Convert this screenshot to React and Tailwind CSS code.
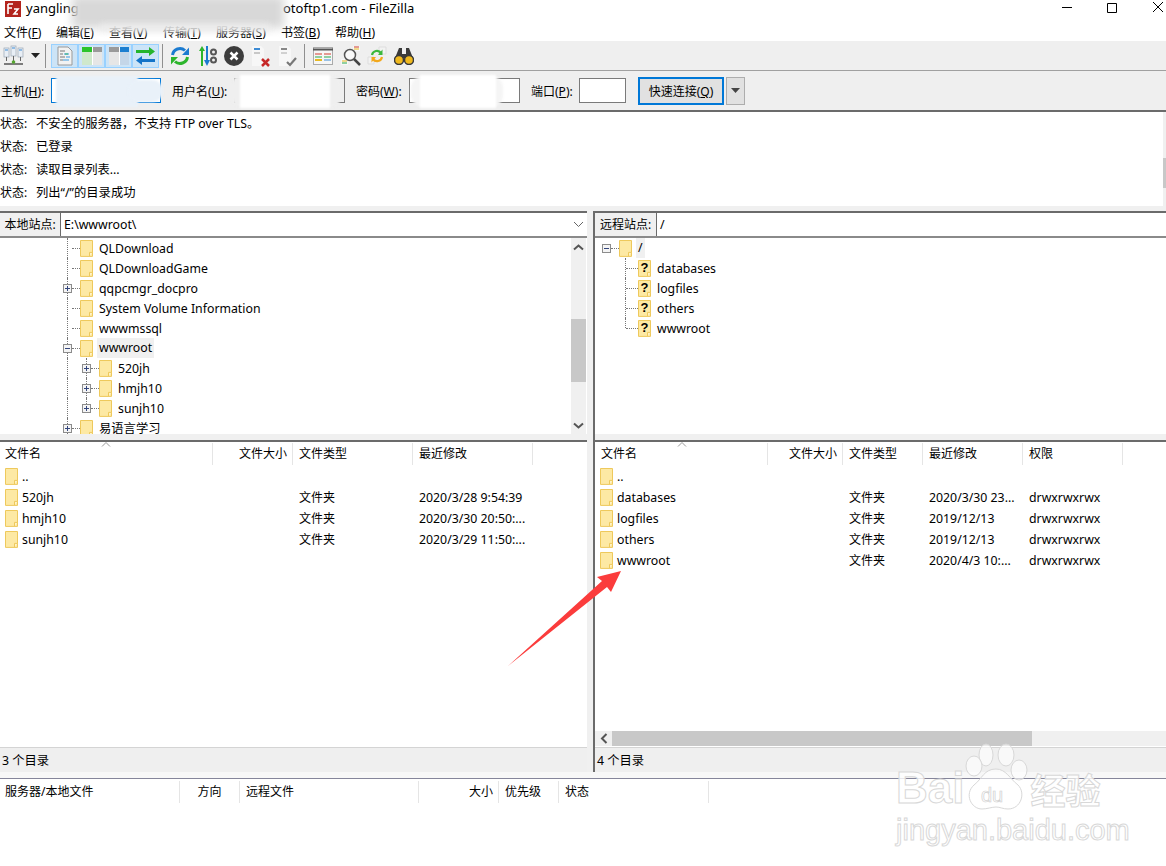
import React from "react";

const Folder = ({ unknown }) => (
  <svg width="13" height="17" viewBox="0 0 13 17" className="shrink-0">
    <path d="M.5.5h12v15.900H.5z" fill="#fde9a4" stroke="#eec95c" />
    <path d="M9.500 16.400v-4h3" fill="#fff3c8" stroke="#eec95c" />
    {unknown && <text x="2.500" y="12" fontSize="13" fontWeight="700" fontFamily="Liberation Sans" fill="#000">?</text>}
  </svg>
);

const Expander = ({ open }) => (
  <svg width="9" height="9" viewBox="0 0 9 9" className="relative z-10 shrink-0">
    <rect x=".5" y=".5" width="8" height="8" fill="#f4f4f4" stroke="#8c8c8c" />
    <path d="M2 4.500h5" stroke="#33457c" />
    {!open && <path d="M4.500 2v5" stroke="#33457c" />}
  </svg>
);

const LocalRow = ({ name, depth, exp, open, active, last }) => (
  <div className="relative flex h-5 shrink-0 items-center">
    <div className="absolute inset-y-0 left-[67px] border-l border-dotted border-[#777]" />
    {depth === 1 && (
      <div className={last ? "absolute top-0 h-[10px] left-[86px] border-l border-dotted border-[#777]" : "absolute inset-y-0 left-[86px] border-l border-dotted border-[#777]"} />
    )}
    <div className={depth === 1 ? "w-[82px] shrink-0" : "w-[63px] shrink-0"} />
    {exp ? <Expander open={open} /> : <div className="w-[9px] shrink-0" />}
    <div className="h-0 w-2 shrink-0 border-t border-dotted border-[#777]" />
    <Folder />
    <span className={active ? "ml-1 flex h-5 items-center bg-[#f0f0f0] px-0.5 pt-px" : "ml-1 px-0.5 leading-[15px]"}>{name}</span>
  </div>
);

const RemoteRow = ({ name, last }) => (
  <div className="relative flex h-5 shrink-0 items-center">
    <div className={last ? "absolute left-[30px] top-0 h-[10px] border-l border-dotted border-[#777]" : "absolute inset-y-0 left-[30px] border-l border-dotted border-[#777]"} />
    <div className="w-[31px] shrink-0" />
    <div className="h-0 w-[12px] shrink-0 border-t border-dotted border-[#777]" />
    <Folder unknown />
    <span className="ml-[6px] leading-[15px]">{name}</span>
  </div>
);

const Chevron = ({ dir }) => (
  <svg width="11" height="8" viewBox="0 0 11 8">
    <path d={dir === "up" ? "M1 6.500l4.500-4 4.500 4" : "M1 1.500l4.500 4 4.500-4"} fill="none" stroke="#555" strokeWidth="2" />
  </svg>
);

const HeaderCell = ({ w, right, children }) => (
  <div className={"flex h-[22px] shrink-0 items-center border-r border-[#e5e5e5] px-[5px] " + w + (right ? " justify-end" : "")}>
    {children}
  </div>
);

const FileRow = ({ name, cols, date, perm }) => (
  <div className="flex h-[21px] shrink-0 items-center leading-[15px]">
    <div className={cols[0] + " flex shrink-0 items-center gap-1 pl-[5px]"}>
      <Folder />
      <span>{name}</span>
    </div>
    <div className={cols[1] + " shrink-0"} />
    <div className={cols[2] + " shrink-0 pl-[6px] text-xs"}>{date && "文件夹"}</div>
    <div className={cols[3] + " shrink-0 whitespace-nowrap pl-[6px]"}>{date}</div>
    {perm && <div className="pl-[6px]">{perm}</div>}
  </div>
);

const ToolSep = () => <div className="mx-[3px] h-[24px] w-px bg-[#8f8f8f]" />;

const Toggle = ({ children }) => (
  <div className="flex h-[24px] w-[27px] items-center justify-center border border-[#99d1ff] bg-[#cce4f7]">{children}</div>
);

const Log = ({ children }) => (
  <div className="flex h-[23px] shrink-0 items-center leading-[15px]">
    <span className="w-9 shrink-0 pt-px text-xs">状态:</span>
    <span>{children}</span>
  </div>
);

const Field = ({ w, children }) => <div className={"h-[25px] shrink-0 border border-[#7a7a7a] " + w}>{children}</div>;

const leftCols = ["w-[213px]", "w-[80px]", "w-[120px]", "w-[120px]"];
const rightCols = ["w-[173px]", "w-[75px]", "w-[80px]", "w-[100px]"];

export default function App() {
  return (
    <div className="relative flex h-[866px] w-[1166px] flex-col overflow-hidden bg-white text-[12.3px] leading-none text-black font-['Noto_Sans','Noto_Sans_CJK_SC',sans-serif]">
      {/* title bar */}
      <div className="flex h-5 shrink-0 items-start pt-px">
        <svg width="16" height="16" viewBox="0 0 16 16" className="ml-[5px] shrink-0">
          <rect width="16" height="16" fill="#b3241d" />
          <path d="M3 3h5M3 3v10M3 7h4M9 8h4l-4 5h4" stroke="#fff" strokeWidth="1.600" fill="none" />
        </svg>
        <span className="ml-[5px] -mt-px w-[257px] shrink-0 text-[13px] leading-[16px]">yangling</span>
        <span className="-mt-px text-[13px] leading-[16px]">otoftp1.com - FileZilla</span>
        <svg width="104" height="14" viewBox="0 0 104 14" className="ml-auto mr-[3px] shrink-0">
          <path d="M3 6.500h10M48.500 2.500h9v9h-9zM94 1l10 10M104 1L94 11" fill="none" stroke="#000" />
        </svg>
      </div>

      {/* menu */}
      <div className="flex h-[21px] shrink-0 items-center pl-1 pt-[5px] text-xs">
        <span className="w-[52px] shrink-0">文件(<u>F</u>)</span>
        <span className="w-[53px] shrink-0">编辑(<u>E</u>)</span>
        <span className="w-[54px] shrink-0">查看(<u>V</u>)</span>
        <span className="w-[53px] shrink-0">传输(<u>T</u>)</span>
        <span className="w-[65px] shrink-0">服务器(<u>S</u>)</span>
        <span className="w-[54px] shrink-0">书签(<u>B</u>)</span>
        <span>帮助(<u>H</u>)</span>
      </div>

      {/* toolbar */}
      <div className="flex h-[30px] shrink-0 items-center border-b border-[#a0a0a0] bg-[#efefef] pl-[3px]">
        <svg width="21" height="24" viewBox="0 0 21 24" className="shrink-0">
          <g fill="#e8eef5" stroke="#9aa7b5" strokeWidth=".7">
            <rect x="1" y="4" width="5" height="9" />
            <rect x="8" y="2" width="5" height="10" />
            <rect x="15" y="4" width="5" height="9" />
          </g>
          <path d="M2 6h3M9 4h3M16 6h3" stroke="#3d8bd4" />
          <path d="M3.500 13v4M10.500 12v5M17.500 13v4" stroke="#666" />
          <path d="M1 20h19" stroke="#555" strokeWidth="1.500" />
          <circle cx="10.500" cy="18" r="1.800" fill="#55a630" />
        </svg>
        <svg width="9" height="5" viewBox="0 0 9 5" className="ml-[7px] mr-[2px] shrink-0"><path d="M0 0h9L4.500 5z" fill="#222" /></svg>
        <ToolSep />
        <div className="ml-[2px] flex">
          <Toggle>
            <svg width="16" height="20" viewBox="0 0 16 20">
              <path d="M1 1h10l4 4v14H1z" fill="#f2f2f2" stroke="#999" />
              <path d="M3 5h5M3 8h3M3 11h5M3 14h3" stroke="#777" />
              <path d="M7 8h5M9 11h4M6 14h6" stroke="#3d9be0" />
              <path d="M8 8h3" stroke="#35b36b" />
            </svg>
          </Toggle>
          <Toggle>
            <svg width="20" height="18" viewBox="0 0 20 18">
              <rect width="20" height="18" fill="#e6e6e6" />
              <rect width="10" height="18" fill="#cfe8cc" />
              <rect width="10" height="5" fill="#2bc42b" />
              <rect x="10" width="10" height="5" fill="#9a9a9a" />
              <path d="M10.500 0v18" stroke="#fff" />
            </svg>
          </Toggle>
          <Toggle>
            <svg width="20" height="18" viewBox="0 0 20 18">
              <rect width="20" height="18" fill="#e6e6e6" />
              <rect x="10" width="10" height="18" fill="#c4d6e8" />
              <rect x="10" width="10" height="5" fill="#1c7fd0" />
              <rect width="10" height="5" fill="#9a9a9a" />
              <path d="M10.500 0v18" stroke="#fff" />
            </svg>
          </Toggle>
          <Toggle>
            <svg width="21" height="20" viewBox="0 0 21 20">
              <path d="M1 5.500h14" stroke="#25b52d" strokeWidth="3" />
              <path d="M14 1l6 4.500-6 4.500z" fill="#25b52d" />
              <path d="M20 14.500H6" stroke="#1474c8" strokeWidth="3" />
              <path d="M7 10l-6 4.500L7 19z" fill="#1474c8" />
            </svg>
          </Toggle>
        </div>
        <ToolSep />
        <svg width="20" height="20" viewBox="0 0 20 20" className="ml-1 shrink-0">
          <path d="M2.500 9A7.500 7.500 0 0 1 15 4.500" fill="none" stroke="#1b7bd0" strokeWidth="3" />
          <path d="M19 1.500V9h-7z" fill="#1b7bd0" />
          <path d="M17.500 11A7.500 7.500 0 0 1 5 15.500" fill="none" stroke="#2cb52c" strokeWidth="3" />
          <path d="M1 18.500V11h7z" fill="#2cb52c" />
        </svg>
        <svg width="20" height="22" viewBox="0 0 20 22" className="ml-2 shrink-0">
          <path d="M4 21V5" stroke="#2cb52c" strokeWidth="2" />
          <path d="M1 6l3-5 3 5z" fill="#2cb52c" />
          <path d="M9 1v15" stroke="#1b7bd0" strokeWidth="2" />
          <path d="M6 15l3 6 3-6z" fill="#1b7bd0" />
          <circle cx="15.500" cy="7" r="2.500" fill="none" stroke="#555" strokeWidth="2" />
          <circle cx="15.500" cy="15" r="2.500" fill="none" stroke="#555" strokeWidth="2" />
        </svg>
        <svg width="20" height="20" viewBox="0 0 20 20" className="ml-[6px] shrink-0">
          <circle cx="10" cy="10" r="10" fill="#3c3c3c" />
          <path d="M6.500 6.500l7 7M13.500 6.500l-7 7" stroke="#fff" strokeWidth="2.500" />
        </svg>
        <svg width="20" height="22" viewBox="0 0 20 22" className="ml-[7px] shrink-0">
          <path d="M1 1h9l3 3v17H1z" fill="#f7f7f7" />
          <path d="M3 4h6" stroke="#3d8bd4" strokeWidth="2" />
          <path d="M3 8h6" stroke="#999" />
          <path d="M11 14l7 7M18 14l-7 7" stroke="#c62828" strokeWidth="2.500" />
        </svg>
        <svg width="20" height="22" viewBox="0 0 20 22" className="ml-[7px] shrink-0">
          <path d="M1 1h9l3 3v17H1z" fill="#f7f7f7" />
          <path d="M3 4h6" stroke="#888" strokeWidth="2" />
          <path d="M3 8h6" stroke="#aaa" />
          <path d="M9 17l3 3 6-7" fill="none" stroke="#777" strokeWidth="2.200" />
        </svg>
        <div className="ml-[3px]"><ToolSep /></div>
        <svg width="20" height="18" viewBox="0 0 20 18" className="ml-[5px] shrink-0">
          <rect x=".5" y=".5" width="19" height="17" fill="#f6f6f6" stroke="#aaa" />
          <path d="M0 2.500h20" stroke="#555" strokeWidth="2" />
          <path d="M2 7h7M11 7h7" stroke="#d23c2e" />
          <path d="M2 10h7M11 10h7" stroke="#2aa84a" />
          <path d="M2 13h7" stroke="#e8b920" strokeWidth="2" />
          <path d="M11 13h7" stroke="#3d8bd4" />
        </svg>
        <svg width="22" height="22" viewBox="0 0 22 22" className="ml-[7px] shrink-0">
          <path d="M13 1h7v5h-7zM1 14h7v6H1z" fill="#f7f7f7" />
          <path d="M14 2h5" stroke="#d23c2e" />
          <path d="M14 4h5" stroke="#e8b920" />
          <path d="M2 16h5" stroke="#e8b920" />
          <path d="M2 18h5" stroke="#2aa84a" />
          <circle cx="10" cy="10" r="5.500" fill="#fff" fillOpacity=".6" stroke="#555" strokeWidth="1.500" />
          <path d="M14 14l6 6" stroke="#444" strokeWidth="2.500" />
        </svg>
        <svg width="20" height="20" viewBox="0 0 20 20" className="ml-[5px] shrink-0">
          <path d="M1 11h6v7H1zM12 1h7v7h-7z" fill="#f2f2f2" stroke="#ddd" />
          <path d="M5 9a5 5 0 0 1 9-2" fill="none" stroke="#3cb83c" strokeWidth="2.200" />
          <path d="M15 11a5 5 0 0 1-9 2" fill="none" stroke="#f2a81d" strokeWidth="2.200" />
          <path d="M15.500 3.500V9H11z" fill="#3cb83c" />
          <path d="M4.500 16.500V11H9z" fill="#f2a81d" />
        </svg>
        <svg width="20" height="18" viewBox="0 0 20 18" className="ml-[7px] shrink-0">
          <path d="M5 1h3v6h4V1h3l4 10H1z" fill="#3a3a3a" />
          <circle cx="5" cy="13" r="4.500" fill="#f0b91e" stroke="#3a3a3a" strokeWidth="1.500" />
          <circle cx="15" cy="13" r="4.500" fill="#f0b91e" stroke="#3a3a3a" strokeWidth="1.500" />
        </svg>
      </div>

      {/* quick connect */}
      <div className="flex h-[41px] shrink-0 items-center border-b-2 border-[#6b6b6b] bg-[#efefef] text-xs">
        <span className="ml-px w-[50px] shrink-0 pt-0.5">主机(<u>H</u>):</span>
        <Field w="w-[110px] border-[#0078d7] bg-white" />
        <span className="ml-[11px] w-[62px] shrink-0 pt-0.5">用户名(<u>U</u>):</span>
        <Field w="w-[111px]" />
        <span className="ml-[11px] w-[53px] shrink-0 pt-0.5">密码(<u>W</u>):</span>
        <Field w="w-[111px] bg-white" />
        <span className="ml-[11px] w-[48px] shrink-0 pt-0.5">端口(<u>P</u>):</span>
        <Field w="w-[47px] bg-white" />
        <div className="ml-3 flex h-7 w-[86px] shrink-0 items-center justify-center border-2 border-[#0078d7] bg-[#e1e1e1] pt-0.5">快速连接(<u>Q</u>)</div>
        <div className="ml-0.5 flex h-7 w-[19px] shrink-0 items-center justify-center border border-[#adadad] bg-[#e1e1e1]">
          <svg width="9" height="5" viewBox="0 0 9 5"><path d="M0 0h9L4.500 5z" fill="#444" /></svg>
        </div>
      </div>

      {/* message log */}
      <div className="flex h-[94px] shrink-0">
        <div className="flex-1">
          <Log>不安全的服务器，不支持 FTP over TLS。</Log>
          <Log>已登录</Log>
          <Log>读取目录列表...</Log>
          <Log>列出“/”的目录成功</Log>
        </div>
        <div className="w-[3px] shrink-0 bg-[#f0f0f0] pt-[46px]">
          <div className="h-[30px] bg-[#c8c8c8]" />
        </div>
      </div>
      <div className="h-[5px] shrink-0 bg-[#f0f0f0]" />

      {/* local and remote panes */}
      <div className="flex h-[561px] shrink-0">
        <div className="flex w-[587px] shrink-0 flex-col">
          <div className="flex h-[27px] shrink-0 border-y-2 border-t-[#6b6b6b] border-b-[#8a8a8a]">
            <div className="flex w-[61px] shrink-0 items-center justify-center border-r border-[#6b6b6b] bg-[#f0f0f0] pt-px text-xs">本地站点:</div>
            <div className="flex flex-1 items-center pl-[3px] pt-0.5">E:\wwwroot\</div>
            <div className="flex w-[14px] shrink-0 items-center"><svg width="11" height="7" viewBox="0 0 11 7"><path d="M1 1l4.500 4.500L10 1" fill="none" stroke="#666" /></svg></div>
          </div>
          <div className="flex h-[196px] shrink-0 overflow-hidden">
            <div className="flex-1">
              <LocalRow name="QLDownload" />
              <LocalRow name="QLDownloadGame" />
              <LocalRow name="qqpcmgr_docpro" exp />
              <LocalRow name="System Volume Information" />
              <LocalRow name="wwwmssql" />
              <LocalRow name="wwwroot" exp open active />
              <LocalRow name="520jh" depth={1} exp />
              <LocalRow name="hmjh10" depth={1} exp />
              <LocalRow name="sunjh10" depth={1} exp last />
              <LocalRow name="易语言学习" exp />
            </div>
            <div className="mr-px flex w-[15px] shrink-0 flex-col bg-[#f0f0f0]">
              <div className="flex h-[17px] shrink-0 items-center justify-center"><Chevron dir="up" /></div>
              <div className="mt-[64px] h-[63px] shrink-0 bg-[#c8c8c8]" />
              <div className="mt-auto flex h-[17px] shrink-0 items-center justify-center"><Chevron /></div>
            </div>
          </div>
          <div className="h-[6px] shrink-0 bg-[#f0f0f0]" />
          <div className="relative flex flex-1 flex-col border-t-2 border-[#6b6b6b]">
            <svg width="10" height="5" viewBox="0 0 10 5" className="absolute left-[101px] top-0"><path d="M1 4.500l4-4 4 4" fill="none" stroke="#999" /></svg>
            <div className="flex h-[24px] shrink-0 items-center text-xs">
              <HeaderCell w="w-[213px]">文件名</HeaderCell>
              <HeaderCell w="w-[80px]" right>文件大小</HeaderCell>
              <HeaderCell w="w-[120px] pl-[6px]">文件类型</HeaderCell>
              <HeaderCell w="w-[120px] pl-[6px]">最近修改</HeaderCell>
            </div>
            <div className="flex flex-1 flex-col">
              <FileRow name=".." cols={leftCols} />
              <FileRow name="520jh" cols={leftCols} date="2020/3/28 9:54:39" />
              <FileRow name="hmjh10" cols={leftCols} date="2020/3/30 20:50:..." />
              <FileRow name="sunjh10" cols={leftCols} date="2020/3/29 11:50:..." />
            </div>
            <div className="flex h-[25px] shrink-0 items-center border-t border-[#d4d4d4] bg-[#efefef] pl-0.5 pt-0.5">3 个目录</div>
          </div>
        </div>
        <div className="w-[6px] shrink-0 bg-[#f0f0f0]" />
        <div className="flex w-[573px] shrink-0 flex-col border-l-2 border-[#6b6b6b]">
          <div className="flex h-[27px] shrink-0 border-y-2 border-t-[#6b6b6b] border-b-[#8a8a8a]">
            <div className="flex w-[62px] shrink-0 items-center justify-center border-r border-[#6b6b6b] bg-[#f0f0f0] pt-px text-xs">远程站点:</div>
            <div className="flex flex-1 items-center pl-[3px] pt-0.5">/</div>
          </div>
          <div className="flex h-[196px] shrink-0 flex-col">
            <div className="flex h-5 shrink-0 items-center pl-[7px]">
              <Expander open />
              <div className="h-0 w-2 shrink-0 border-t border-dotted border-[#777]" />
              <Folder />
              <span className="ml-1 flex h-5 items-center bg-[#f0f0f0] px-0.5">/</span>
            </div>
            <RemoteRow name="databases" />
            <RemoteRow name="logfiles" />
            <RemoteRow name="others" />
            <RemoteRow name="wwwroot" last />
          </div>
          <div className="h-[6px] shrink-0 bg-[#f0f0f0]" />
          <div className="relative flex flex-1 flex-col border-t-2 border-[#6b6b6b]">
            <svg width="10" height="5" viewBox="0 0 10 5" className="absolute left-[82px] top-0"><path d="M1 4.500l4-4 4 4" fill="none" stroke="#999" /></svg>
            <div className="flex h-[24px] shrink-0 items-center text-xs">
              <HeaderCell w="w-[173px] pl-[6px]">文件名</HeaderCell>
              <HeaderCell w="w-[75px]" right>文件大小</HeaderCell>
              <HeaderCell w="w-[80px] pl-[6px]">文件类型</HeaderCell>
              <HeaderCell w="w-[100px] pl-[6px]">最近修改</HeaderCell>
              <HeaderCell w="w-[100px] pl-[6px]">权限</HeaderCell>
            </div>
            <div className="flex flex-1 flex-col">
              <FileRow name=".." cols={rightCols} />
              <FileRow name="databases" cols={rightCols} date="2020/3/30 23..." perm="drwxrwxrwx" />
              <FileRow name="logfiles" cols={rightCols} date="2019/12/13" perm="drwxrwxrwx" />
              <FileRow name="others" cols={rightCols} date="2019/12/13" perm="drwxrwxrwx" />
              <FileRow name="wwwroot" cols={rightCols} date="2020/4/3 10:..." perm="drwxrwxrwx" />
            </div>
            <div className="flex h-[15px] shrink-0 bg-[#f0f0f0]">
              <div className="flex w-[17px] shrink-0 items-center justify-center">
                <svg width="8" height="11" viewBox="0 0 8 11"><path d="M6.500 1l-4.500 4.500L6.500 10" fill="none" stroke="#555" strokeWidth="2" /></svg>
              </div>
              <div className="w-[420px] shrink-0 bg-[#c8c8c8]" />
            </div>
            <div className="mt-px flex h-[25px] shrink-0 items-center border-t border-[#d4d4d4] bg-[#efefef] pl-0.5 pt-0.5">4 个目录</div>
          </div>
        </div>
      </div>

      {/* transfer queue */}
      <div className="h-[7px] shrink-0 border-b border-[#85859a] bg-[#f7f7f7]" />
      <div className="flex h-[24px] shrink-0 items-center pt-[2px] text-xs">
        <HeaderCell w="w-[180px]">服务器/本地文件</HeaderCell>
        <HeaderCell w="w-[60px] justify-center">方向</HeaderCell>
        <HeaderCell w="w-[179px] pl-[6px]">远程文件</HeaderCell>
        <HeaderCell w="w-[80px]" right>大小</HeaderCell>
        <HeaderCell w="w-[60px] pl-[6px]">优先级</HeaderCell>
        <HeaderCell w="w-[150px] pl-[6px]">状态</HeaderCell>
      </div>

      {/* blurred-out details in the screenshot */}
      <div className="absolute left-[72px] top-[-4px] h-[32px] w-[212px] bg-[#d8d8d8] blur-[5px]" />
      <div className="absolute left-[100px] top-[24px] h-[7px] w-[170px] bg-[#ececec] blur-[3px]" />
      <div className="absolute left-[56px] top-[76px] h-[31px] w-[82px] bg-[#e9f1f9] blur-[1px]" />
      <div className="absolute left-[128px] top-[80px] h-[22px] w-[35px] rounded-full bg-[#e9f1f9] blur-[1px]" />
      <div className="absolute left-[232px] top-[76px] h-[31px] w-[108px] rounded-lg bg-[#efefef] blur-[1px]" />
      <div className="absolute left-[240px] top-[75px] h-[33px] w-[90px] bg-white blur-[1px]" />
      <div className="absolute left-[411px] top-[76px] h-[31px] w-[92px] rounded-xl bg-[#f5f5f5] blur-[1px]" />
      <div className="absolute left-[420px] top-[75px] h-[33px] w-[76px] bg-white blur-[1px]" />

      {/* red arrow */}
      <svg width="130" height="110" viewBox="0 0 130 110" className="absolute left-[500px] top-[565px]">
        <path d="M8 101L102 16 97 12 121 6 111 27 107 22z" fill="#fb3c3c" />
      </svg>

      {/* watermark */}
      <div className="absolute left-[896px] top-[742px] flex flex-col font-['Liberation_Sans',sans-serif]">
        <div className="flex h-[68px] items-end">
          <span className="text-[44px] font-bold leading-[44px] text-white/80 [-webkit-text-stroke:1px_#d8d8d8]">Bai</span>
          <div className="relative h-[68px] w-[64px] shrink-0">
            <svg width="64" height="68" viewBox="0 0 64 68" className="absolute left-0 top-0">
              <g fill="#fff" fillOpacity=".6" stroke="#d8d8d8">
                <ellipse cx="22" cy="13" rx="7" ry="11" />
                <ellipse cx="42" cy="13" rx="8" ry="11" />
                <ellipse cx="10" cy="24" rx="8" ry="10" />
                <ellipse cx="55" cy="28" rx="8" ry="10" />
                <path d="M32 27c10 0 14 10 22 16 8 8 3 24-10 24-5 0-8-2-12-2s-9 2-14 2C7 67 0 52 10 43c8-6 10-16 22-16z" />
              </g>
              <text x="17" y="60" fontSize="20" fontFamily="Liberation Sans" fill="#fff" stroke="#d0d0d0" strokeWidth=".7">du</text>
            </svg>
          </div>
          <span className="ml-0.5 text-[35px] font-bold leading-[42px] text-white/80 [-webkit-text-stroke:1px_#d8d8d8] font-['Noto_Sans_CJK_SC',sans-serif]">经验</span>
        </div>
        <span className="mt-0.5 text-[29px] leading-[36px] text-white/80 [-webkit-text-stroke:1px_#d8d8d8]">jingyan.baidu.com</span>
      </div>
    </div>
  );
}
